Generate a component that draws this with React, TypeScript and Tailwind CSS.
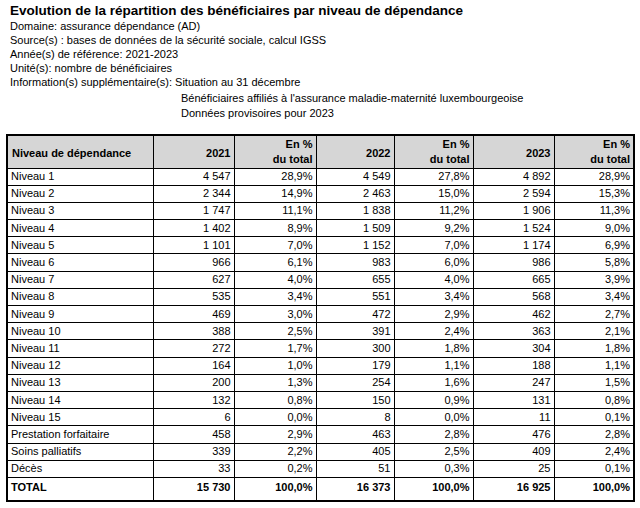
const rows: [string, string, string, string, string, string, string][] = [
  ["Niveau 1", "4 547", "28,9%", "4 549", "27,8%", "4 892", "28,9%"],
  ["Niveau 2", "2 344", "14,9%", "2 463", "15,0%", "2 594", "15,3%"],
  ["Niveau 3", "1 747", "11,1%", "1 838", "11,2%", "1 906", "11,3%"],
  ["Niveau 4", "1 402", "8,9%", "1 509", "9,2%", "1 524", "9,0%"],
  ["Niveau 5", "1 101", "7,0%", "1 152", "7,0%", "1 174", "6,9%"],
  ["Niveau 6", "966", "6,1%", "983", "6,0%", "986", "5,8%"],
  ["Niveau 7", "627", "4,0%", "655", "4,0%", "665", "3,9%"],
  ["Niveau 8", "535", "3,4%", "551", "3,4%", "568", "3,4%"],
  ["Niveau 9", "469", "3,0%", "472", "2,9%", "462", "2,7%"],
  ["Niveau 10", "388", "2,5%", "391", "2,4%", "363", "2,1%"],
  ["Niveau 11", "272", "1,7%", "300", "1,8%", "304", "1,8%"],
  ["Niveau 12", "164", "1,0%", "179", "1,1%", "188", "1,1%"],
  ["Niveau 13", "200", "1,3%", "254", "1,6%", "247", "1,5%"],
  ["Niveau 14", "132", "0,8%", "150", "0,9%", "131", "0,8%"],
  ["Niveau 15", "6", "0,0%", "8", "0,0%", "11", "0,1%"],
  ["Prestation forfaitaire", "458", "2,9%", "463", "2,8%", "476", "2,8%"],
  ["Soins palliatifs", "339", "2,2%", "405", "2,5%", "409", "2,4%"],
  ["Décès", "33", "0,2%", "51", "0,3%", "25", "0,1%"],
];

const total = ["TOTAL", "15 730", "100,0%", "16 373", "100,0%", "16 925", "100,0%"];

const widths = ["w-[146px]", "w-[81px]", "w-[82px]", "w-[78px]", "w-[79px]", "w-[81px]", "w-[80px]"];

function Header() {
  const pct = (
    <>
      En %
      <br />
      du total
    </>
  );
  return (
    <tr className="h-[33px] bg-[#d6d6d6] font-bold">
      <th className="border border-black px-[4px] pt-[2px] text-left">Niveau de dépendance</th>
      <th className="border border-black px-[3px] pt-[2px] text-right">2021</th>
      <th className="border border-black px-[3px] text-right leading-[15px]">{pct}</th>
      <th className="border border-black px-[3px] pt-[2px] text-right">2022</th>
      <th className="border border-black px-[3px] text-right leading-[15px]">{pct}</th>
      <th className="border border-black px-[3px] pt-[2px] text-right">2023</th>
      <th className="border border-black px-[3px] text-right leading-[15px]">{pct}</th>
    </tr>
  );
}

export default function App() {
  return (
    <div className="min-h-[508px] w-[640px] bg-white text-black font-['Liberation_Sans',Arial,sans-serif] text-[11px]">
      <div className="pl-[10px] pt-[3px]">
        <h1 className="h-[16px] text-[13.5px] font-bold leading-[16px]">
          Evolution de la répartition des bénéficiaires par niveau de dépendance
        </h1>
        <div className="leading-[14px]">
          <p>Domaine: assurance dépendance (AD)</p>
          <p>Source(s) : bases de données de la sécurité sociale, calcul IGSS</p>
          <p>Année(s) de référence: 2021-2023</p>
          <p>Unité(s): nombre de bénéficiaires</p>
          <p>Information(s) supplémentaire(s): Situation au 31 décembre</p>
          <p className="mt-[2px] pl-[171px]">Bénéficiaires affiliés à l'assurance maladie-maternité luxembourgeoise</p>
          <p className="mt-px pl-[171px]">Données provisoires pour 2023</p>
        </div>
      </div>
      <table className="ml-[6px] mt-[14px] w-[627px] table-fixed border-collapse border-2 border-black">
        <colgroup>
          {widths.map((w, i) => (
            <col key={i} className={w} />
          ))}
        </colgroup>
        <thead>
          <Header />
        </thead>
        <tbody>
          {rows.map((r) => (
            <tr key={r[0]} className="h-[17.2px]">
              {r.map((c, i) => (
                <td
                  key={i}
                  className={
                    i === 0
                      ? "border border-black px-[3px] py-0 leading-[15px] text-left"
                      : "border border-black px-[3px] py-0 leading-[15px] text-right"
                  }
                >
                  {c}
                </td>
              ))}
            </tr>
          ))}
          <tr className="h-[24px] font-bold">
            {total.map((c, i) => (
              <td
                key={i}
                className={
                  i === 0
                    ? "border border-black px-[3px] pb-[3px] text-left"
                    : "border border-black px-[3px] pb-[3px] text-right"
                }
              >
                {c}
              </td>
            ))}
          </tr>
        </tbody>
      </table>
    </div>
  );
}
